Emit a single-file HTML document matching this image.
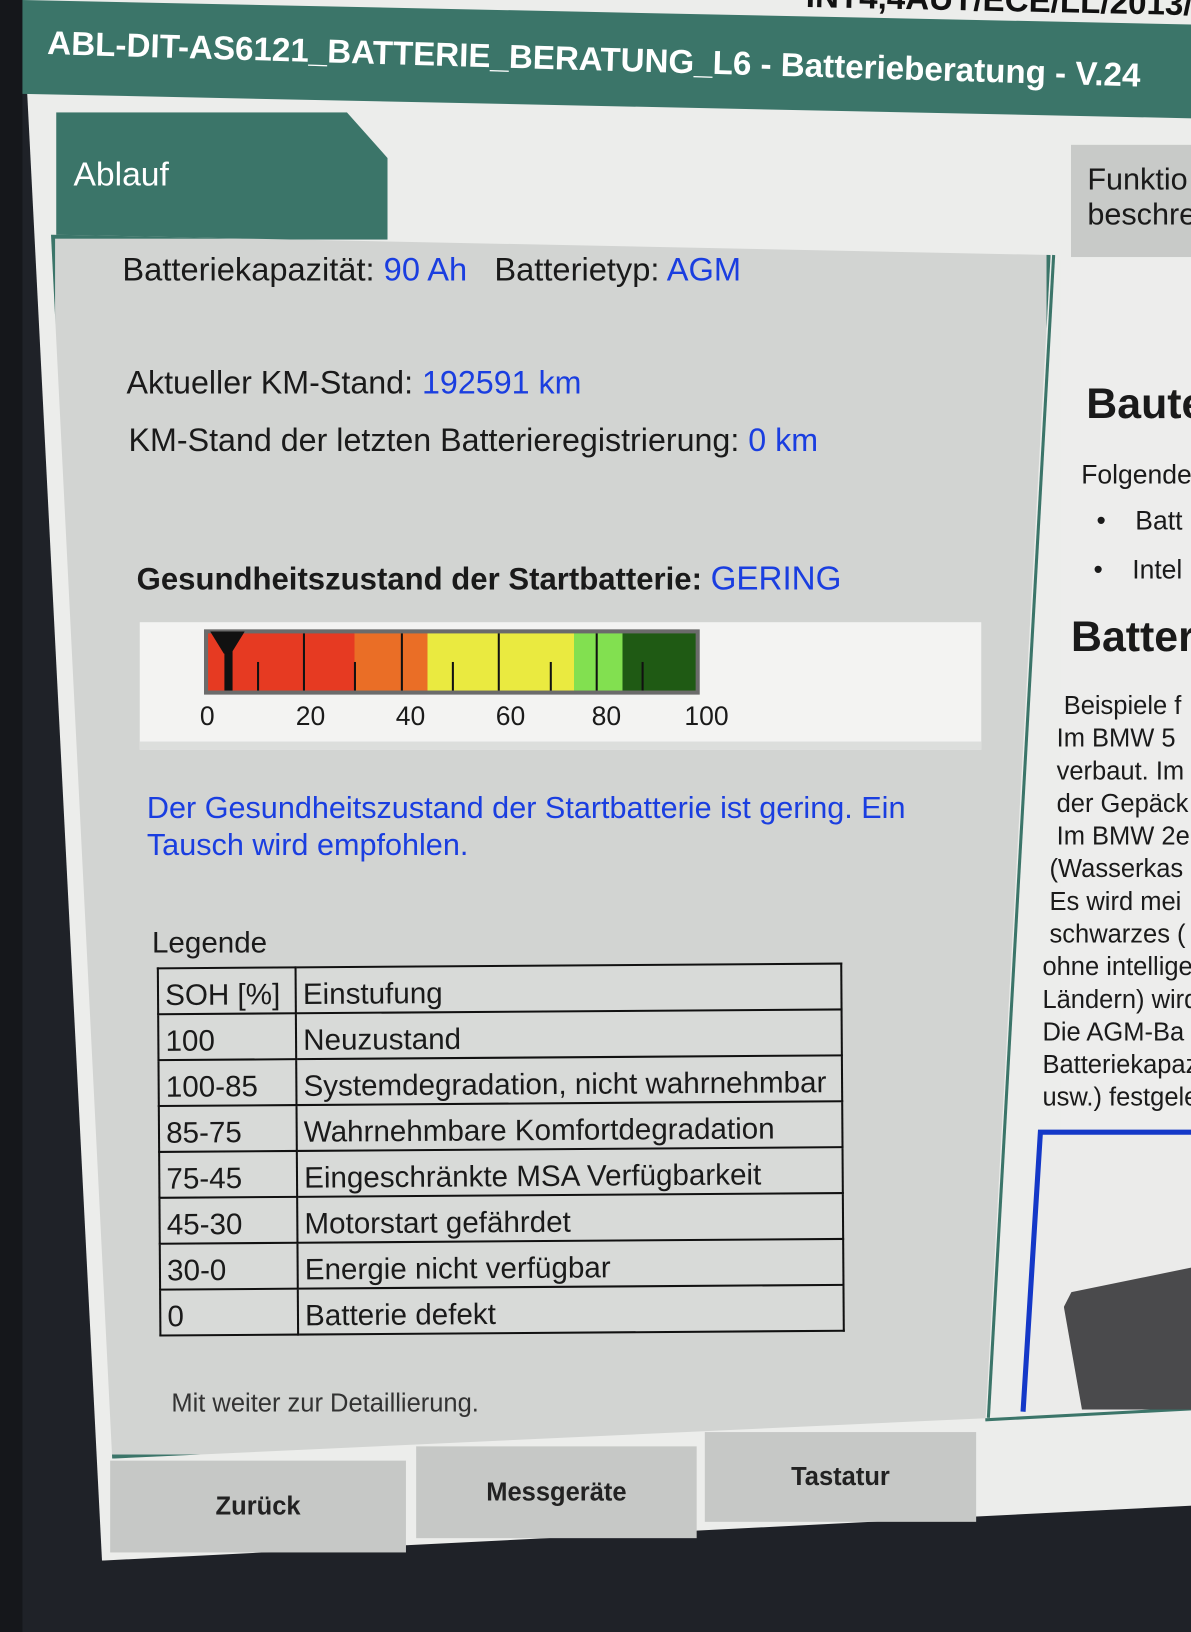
<!DOCTYPE html>
<html><head><meta charset="utf-8"><style>
*{margin:0;padding:0;box-sizing:border-box}
body{width:1191px;height:1600px;overflow:hidden;background:#1f2228;font-family:"Liberation Sans",sans-serif;position:relative}
.w{position:absolute;left:0;top:0;width:1191px;height:1600px;transform:scale(1.02);transform-origin:0 0}
.a{position:absolute}
.screen{left:0;top:0;width:1191px;height:1600px;background:#ecedeb;clip-path:polygon(22px 0,1191px 0,1191px 1475px,100px 1530px)}
.hdr{left:22px;top:0;width:1169px;height:92px;background:#3b7569;transform:skewY(1.2deg);transform-origin:0 0}
.t{color:#fff;font-weight:bold;font-size:32.5px;white-space:nowrap}
.tab{left:55px;top:110px;width:325px;height:125px;background:#3b7569;clip-path:polygon(0 0,285px 0,325px 45px,325px 125px,0 125px)}
.panel{left:50px;top:230px;width:980px;height:1200px;background:#d2d4d2;border:4px solid #3b7569;clip-path:polygon(0 0,100% 20px,93.5% 96.7%,60px 100%)}
.bk{color:#1a1a1a;font-size:32px;white-space:nowrap}
.bl{color:#1a3ee0}
table{border-collapse:collapse;font-size:29px;color:#1a1a1a;background:#d8dad8}
td{border:2.5px solid #111;height:45px;padding:0 6px;vertical-align:bottom}
.btn{background:#c6c8c6;color:#222;font-weight:bold;font-size:25px;display:flex;align-items:center;justify-content:center}
.rp{left:1040px;top:255px;width:151px;height:1130px;background:#ededec}
</style></head><body>
<div class="w">
<div class="a screen"></div>
<div class="a" style="left:0;top:0;width:22px;height:1600px;background:#15171b"></div>
<div class="a hdr"></div>
<div class="a t" style="left:47px;top:24px;transform:rotate(1.7deg);transform-origin:0 0">ABL-DIT-AS6121_BATTERIE_BERATUNG_L6 - Batterieberatung - V.24</div>
<div class="a t" style="left:790px;top:-18px;color:#111;transform:rotate(1.2deg)">INT4,4AUT/ECE/LL/2013/1</div>
<div class="a tab"></div>
<div class="a" style="left:72px;top:152px;color:#fff;font-size:33px">Ablauf</div>
<div class="a" style="left:1050px;top:142px;width:141px;height:110px;background:#c8cac8"></div>
<div class="a bk" style="left:1066px;top:160px;font-size:30px">Funktio<br>beschre</div>
<div class="a rp"></div>
<div class="a bk" style="left:1065px;top:372px;font-size:42px;font-weight:bold">Baute</div>
<div class="a bk" style="left:1060px;top:450px;font-size:26px">Folgende</div>
<div class="a bk" style="left:1075px;top:495px;font-size:26px">•&nbsp;&nbsp;&nbsp;&nbsp;Batt</div>
<div class="a bk" style="left:1072px;top:543px;font-size:26px">•&nbsp;&nbsp;&nbsp;&nbsp;Intel</div>
<div class="a bk" style="left:1050px;top:600px;font-size:42px;font-weight:bold">Batter</div>
<div class="a bk" style="left:1022px;top:676px;font-size:25px;line-height:32px">&nbsp;&nbsp;&nbsp;Beispiele f<br>&nbsp;&nbsp;Im BMW 5<br>&nbsp;&nbsp;verbaut. Im<br>&nbsp;&nbsp;der Gepäck<br>&nbsp;&nbsp;Im BMW 2e<br>&nbsp;(Wasserkas<br>&nbsp;Es wird mei<br>&nbsp;schwarzes (<br>ohne intellige<br>Ländern) wird<br>Die AGM-Ba<br>Batteriekapaz<br>usw.) festgele</div>
<div class="a panel"></div>
<svg class="a" style="left:0;top:0" width="1191" height="1600">
<polygon points="1020,1110 1191,1110 1191,1384 1003,1384" fill="#ebebea"/>
<polyline points="1191,1110 1020,1110 1003,1384" fill="none" stroke="#1438c8" stroke-width="5"/>
<line x1="1033" y1="250" x2="969" y2="1390" stroke="#3b7569" stroke-width="3"/>
<line x1="966" y1="1392" x2="1191" y2="1380" stroke="#3b7569" stroke-width="3"/>
</svg>
<div class="a" style="left:1043px;top:1238px;width:148px;height:144px;background:#4a4a4c;clip-path:polygon(5% 20%,100% 0,100% 100%,12% 100%,0 30%)"></div>
<div class="a bk" style="left:120px;top:246px">Batteriekapazität: <span class="bl">90 Ah</span>&nbsp;&nbsp; Batterietyp: <span class="bl">AGM</span></div>
<div class="a bk" style="left:124px;top:357px;font-size:31.6px">Aktueller KM-Stand: <span class="bl">192591 km</span></div>
<div class="a bk" style="left:126px;top:413px;font-size:31.6px">KM-Stand der letzten Batterieregistrierung: <span class="bl">0 km</span></div>
<div class="a bk" style="left:134px;top:549px;font-weight:bold;font-size:30.5px">Gesundheitszustand der Startbatterie: <span class="bl" style="font-weight:normal;font-size:32.5px">GERING</span></div>
<div class="a" style="left:137px;top:610px;width:825px;height:125px;background:#f3f3f2;border-bottom:8px solid #dcdedc"></div>
<div class="a" style="left:200px;top:617px;width:486px;height:64px;background:#6b6b6b;padding:4px">
<div style="width:100%;height:100%;background:linear-gradient(90deg,#e63a22 0 30%,#ea6e26 30% 45%,#eaea40 45% 75%,#82e050 75% 85%,#1f5a14 85% 100%);position:relative">
<div class="a" style="left:16px;top:0;width:8px;height:56px;background:#111"></div>
<div class="a" style="left:2px;top:-2px;width:34px;height:22px;background:#111;clip-path:polygon(0 0,100% 0,60% 100%,40% 100%)"></div>
<div class="a" style="left:19.5%;top:0;width:2px;height:56px;background:#111"></div>
<div class="a" style="left:39.5%;top:0;width:2px;height:56px;background:#111"></div>
<div class="a" style="left:59.5%;top:0;width:2px;height:56px;background:#111"></div>
<div class="a" style="left:79.5%;top:0;width:2px;height:56px;background:#111"></div>
<div class="a" style="left:10%;top:28px;width:2px;height:28px;background:#111"></div>
<div class="a" style="left:30%;top:28px;width:2px;height:28px;background:#111"></div>
<div class="a" style="left:50%;top:28px;width:2px;height:28px;background:#111"></div>
<div class="a" style="left:70%;top:28px;width:2px;height:28px;background:#111"></div>
<div class="a" style="left:89%;top:28px;width:2px;height:28px;background:#111"></div>
</div></div>
<div class="a bk" style="left:196px;top:687px;font-size:26px">0</div>
<div class="a bk" style="left:290px;top:687px;font-size:26px">20</div>
<div class="a bk" style="left:388px;top:687px;font-size:26px">40</div>
<div class="a bk" style="left:486px;top:687px;font-size:26px">60</div>
<div class="a bk" style="left:580px;top:687px;font-size:26px">80</div>
<div class="a bk" style="left:671px;top:687px;font-size:26px">100</div>
<div class="a bl" style="left:144px;top:775px;font-size:30px;line-height:36px;white-space:nowrap">Der Gesundheitszustand der Startbatterie ist gering. Ein<br>Tausch wird empfohlen.</div>
<div class="a bk" style="left:149px;top:909px;font-size:29px">Legende</div>
<table class="a" style="left:155px;top:946px;width:672px;transform:rotate(-0.4deg)">
<tr><td style="width:135px">SOH [%]</td><td>Einstufung</td></tr>
<tr><td>100</td><td>Neuzustand</td></tr>
<tr><td>100-85</td><td>Systemdegradation, nicht wahrnehmbar</td></tr>
<tr><td>85-75</td><td>Wahrnehmbare Komfortdegradation</td></tr>
<tr><td>75-45</td><td>Eingeschränkte MSA Verfügbarkeit</td></tr>
<tr><td>45-30</td><td>Motorstart gefährdet</td></tr>
<tr><td>30-0</td><td>Energie nicht verfügbar</td></tr>
<tr><td>0</td><td>Batterie defekt</td></tr>
</table>
<div class="a bk" style="left:168px;top:1362px;font-size:25px;color:#333">Mit weiter zur Detaillierung.</div>
<div class="a btn" style="left:108px;top:1432px;width:290px;height:90px">Zurück</div>
<div class="a btn" style="left:408px;top:1418px;width:275px;height:90px">Messgeräte</div>
<div class="a btn" style="left:691px;top:1404px;width:266px;height:88px">Tastatur</div>
</div>
</body></html>
